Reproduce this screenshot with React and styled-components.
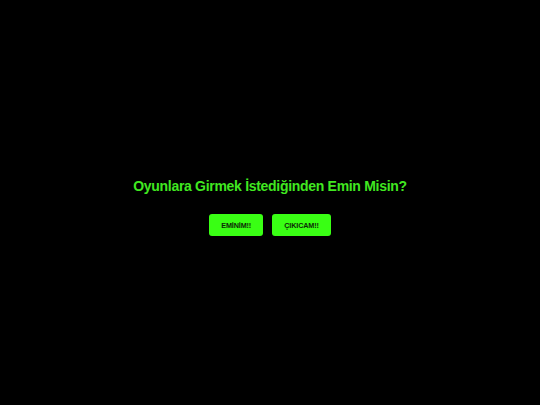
import React from "react";
import styled, { createGlobalStyle } from "styled-components";

const Global = createGlobalStyle`
  html, body { margin: 0; padding: 0; background: #000; }
  body { font-family: "Liberation Sans", Arial, sans-serif; }
`;

const Screen = styled.div`
  width: 540px;
  height: 405px;
  box-sizing: border-box;
  padding-top: 9px;
  background: #000;
  display: flex;
  flex-direction: column;
  align-items: center;
  justify-content: center;
`;

const Title = styled.h1`
  margin: 0 0 19px;
  font-size: 14px;
  letter-spacing: -0.3px;
  font-weight: 700;
  color: #40e820;
  line-height: 17px;
`;

const Row = styled.div`
  display: flex;
  gap: 9px;
`;

const Button = styled.button`
  font-family: "Liberation Sans", Arial, sans-serif;
  font-size: 7.2px;
  letter-spacing: -0.1px;
  font-weight: 700;
  color: #0c2a06;
  background: #39ff14;
  border: none;
  border-radius: 3px;
  height: 22px;
  padding: 0 12px;
  cursor: pointer;
`;

export default function App() {
  return (
    <>
      <Global />
      <Screen>
        <Title>Oyunlara Girmek İstediğinden Emin Misin?</Title>
        <Row>
          <Button>EMİNİM!!</Button>
          <Button>ÇIKICAM!!</Button>
        </Row>
      </Screen>
    </>
  );
}
